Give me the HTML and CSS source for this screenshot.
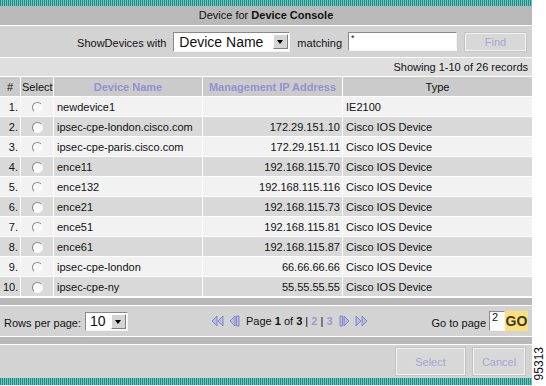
FILE: index.html
```html
<!DOCTYPE html>
<html>
<head>
    <meta charset="UTF-8">
    <title>Device for Device Console</title>
    <link rel="stylesheet" href="styles.css">
</head>
<body>
<div class="page">
    <div class="panel">
        <div class="stripe"></div>
        <div class="title-bar">Device for <b>Device Console</b></div>

        <div class="search-bar">
            <span>ShowDevices with</span>
            <div class="dropdown dropdown-wide">
                <span class="dropdown-value">Device Name</span>
                <span class="dropdown-arrow"></span>
            </div>
            <span>matching</span>
            <div class="textbox">*</div>
            <button class="btn btn-find">Find</button>
        </div>

        <div class="records">Showing 1-10 of 26 records</div>

        <table class="devices">
            <tr class="head">
                <th class="col-num">#</th>
                <th class="col-select">Select</th>
                <th class="col-name sortable">Device Name</th>
                <th class="col-ip sortable">Management IP Address</th>
                <th class="col-type">Type</th>
            </tr>
            <tr class="odd">
                <td class="num">1.</td><td class="sel"><span class="radio"></span></td>
                <td>newdevice1</td><td class="ip"></td><td>IE2100</td>
            </tr>
            <tr class="even">
                <td class="num">2.</td><td class="sel"><span class="radio"></span></td>
                <td>ipsec-cpe-london.cisco.com</td><td class="ip">172.29.151.10</td><td>Cisco IOS Device</td>
            </tr>
            <tr class="odd">
                <td class="num">3.</td><td class="sel"><span class="radio"></span></td>
                <td>ipsec-cpe-paris.cisco.com</td><td class="ip">172.29.151.11</td><td>Cisco IOS Device</td>
            </tr>
            <tr class="even">
                <td class="num">4.</td><td class="sel"><span class="radio"></span></td>
                <td>ence11</td><td class="ip">192.168.115.70</td><td>Cisco IOS Device</td>
            </tr>
            <tr class="odd">
                <td class="num">5.</td><td class="sel"><span class="radio"></span></td>
                <td>ence132</td><td class="ip">192.168.115.116</td><td>Cisco IOS Device</td>
            </tr>
            <tr class="even">
                <td class="num">6.</td><td class="sel"><span class="radio"></span></td>
                <td>ence21</td><td class="ip">192.168.115.73</td><td>Cisco IOS Device</td>
            </tr>
            <tr class="odd">
                <td class="num">7.</td><td class="sel"><span class="radio"></span></td>
                <td>ence51</td><td class="ip">192.168.115.81</td><td>Cisco IOS Device</td>
            </tr>
            <tr class="even">
                <td class="num">8.</td><td class="sel"><span class="radio"></span></td>
                <td>ence61</td><td class="ip">192.168.115.87</td><td>Cisco IOS Device</td>
            </tr>
            <tr class="odd">
                <td class="num">9.</td><td class="sel"><span class="radio"></span></td>
                <td>ipsec-cpe-london</td><td class="ip">66.66.66.66</td><td>Cisco IOS Device</td>
            </tr>
            <tr class="even">
                <td class="num">10.</td><td class="sel"><span class="radio"></span></td>
                <td>ipsec-cpe-ny</td><td class="ip">55.55.55.55</td><td>Cisco IOS Device</td>
            </tr>
        </table>

        <div class="divider-bar"></div>

        <div class="pager">
            <div class="rows-per-page">
                <span>Rows per page:</span>
                <div class="dropdown dropdown-small">
                    <span class="dropdown-value">10</span>
                    <span class="dropdown-arrow"></span>
                </div>
            </div>

            <div class="page-nav">
                <svg class="nav-icon" width="13" height="12" viewBox="0 0 13 12">
                    <path d="M6 1 L1 6 L6 11 Z M12 1 L7 6 L12 11 Z"/>
                </svg>
                <svg class="nav-icon" width="12" height="12" viewBox="0 0 12 12">
                    <path d="M7 1 L2 6 L7 11 Z M8.5 1 H11 V11 H8.5 Z"/>
                </svg>
                <span class="page-label">Page <b>1</b> of <b>3</b> | <a class="page-link">2</a> | <a class="page-link">3</a></span>
                <svg class="nav-icon" width="12" height="12" viewBox="0 0 12 12">
                    <path d="M1 1 H3.5 V11 H1 Z M5 1 L10 6 L5 11 Z"/>
                </svg>
                <svg class="nav-icon" width="13" height="12" viewBox="0 0 13 12">
                    <path d="M1 1 L6 6 L1 11 Z M7 1 L12 6 L7 11 Z"/>
                </svg>
            </div>

            <div class="goto">
                <span>Go to page</span>
                <div class="textbox textbox-page">2</div>
                <button class="btn-go">GO</button>
            </div>
        </div>

        <div class="divider-bar"></div>

        <div class="actions">
            <button class="btn btn-action">Select</button>
            <button class="btn btn-action">Cancel</button>
        </div>

        <div class="stripe"></div>
    </div>

    <div class="fig-num"><span>95313</span></div>
</div>
</body>
</html>
```

FILE: styles.css
```css
body {
    margin: 0;
    background: #fff;
    font-family: "Liberation Sans", Arial, sans-serif;
    font-size: 11px;
    color: #111;
}

.page {
    display: flex;
    width: 546px;
    height: 386px;
    overflow: hidden;
}

.panel {
    width: 532px;
    display: flex;
    flex-direction: column;
}

.stripe {
    height: 6px;
    background: repeating-linear-gradient(90deg, #1f8c88 0 1px, #6cc4bd 1px 2px);
}

.panel .stripe:last-child {
    height: 7px;
}

.title-bar {
    height: 19px;
    line-height: 19px;
    text-align: center;
    background: #b9b9b9;
    font-size: 11px;
}

/* Search row */
.search-bar {
    display: flex;
    align-items: center;
    justify-content: flex-end;
    gap: 7px;
    height: 31px;
    margin-top: 1px;
    padding-right: 6px;
    background: #d3d3d3;
    font-size: 11px;
}

.search-bar > span {
    margin-top: 3px;
}

.dropdown {
    display: flex;
    align-items: center;
    justify-content: space-between;
    background: #fff;
    border: 1px solid;
    border-color: #8a8a8a #f4f4f4 #f4f4f4 #8a8a8a;
    box-sizing: border-box;
}

.dropdown-wide {
    width: 117px;
    height: 20px;
    font-size: 14px;
    padding-left: 5px;
}

.dropdown-small {
    width: 43px;
    height: 19px;
    font-size: 14px;
    padding-left: 4px;
}

.dropdown-arrow {
    position: relative;
    width: 15px;
    height: 15px;
    margin-right: 1px;
    background: #d4d4d4;
    border: 1px solid;
    border-color: #fff #808080 #808080 #fff;
    box-sizing: border-box;
}

.dropdown-arrow:before {
    content: "";
    position: absolute;
    left: 3px;
    top: 5px;
    border-left: 3.5px solid transparent;
    border-right: 3.5px solid transparent;
    border-top: 4px solid #000;
}

.textbox {
    width: 109px;
    height: 19px;
    box-sizing: border-box;
    background: #fff;
    border: 1px solid;
    border-color: #8a8a8a #f4f4f4 #f4f4f4 #8a8a8a;
    font-size: 9px;
    line-height: 10px;
    padding-left: 2px;
    margin-left: -1px;
}

.btn {
    font-family: "Liberation Sans", Arial, sans-serif;
    background: #d8d8d8;
    border: 1px solid #f2f2f2;
    outline: 1px solid #c4c4c4;
    color: #a6a6cf;
    font-size: 11px;
    padding: 0;
}

.btn-find {
    width: 61px;
    height: 18px;
    margin-left: 1px;
}

.records {
    height: 18px;
    line-height: 19px;
    margin-top: 1px;
    text-align: right;
    padding-right: 4px;
    background: #dfdfdf;
}

/* Device table */
.devices {
    width: 532px;
    border-collapse: collapse;
    table-layout: fixed;
}

.devices th,
.devices td {
    border: 1px solid #fff;
    height: 19px;
    padding: 0 3px;
    font-size: 11px;
    white-space: nowrap;
    overflow: hidden;
}

.devices th:first-child,
.devices td:first-child {
    border-left: none;
}

.devices th:last-child,
.devices td:last-child {
    border-right: none;
}

.head th {
    background: #cbcbcb;
    font-weight: normal;
}

.devices .col-num { width: 14px; }
.devices .col-select { width: 30px; padding: 0 1px; }
.devices .col-name { width: 142px; }
.devices .col-ip { width: 133px; }

.head .sortable {
    color: #9292d2;
    font-weight: bold;
}

.odd td { background: #f2f2f2; }
.even td { background: #d9d9d9; }

.devices .num { text-align: right; padding-right: 2px; }
.devices .sel { text-align: center; }
.devices .ip { text-align: right; padding-right: 2px; }

.radio {
    display: inline-block;
    width: 9px;
    height: 9px;
    border-radius: 50%;
    border: 1.5px solid;
    border-color: #8a8a8a #f8f8f8 #f8f8f8 #8a8a8a;
    background: #fbfbfb;
    vertical-align: middle;
    margin-top: 1px;
}

.divider-bar {
    height: 7px;
    margin-top: 1px;
    background: #b9b9b9;
}

/* Paging row */
.pager {
    display: flex;
    align-items: center;
    height: 30px;
    margin-top: 1px;
    padding: 0 4px;
    background: #d3d3d3;
    font-size: 11px;
}

.rows-per-page,
.goto,
.page-nav {
    display: flex;
    align-items: center;
}

.rows-per-page {
    gap: 4px;
    width: 207px;
}

.rows-per-page > span {
    margin-top: 4px;
}

.page-nav {
    gap: 4px;
    white-space: nowrap;
}

.nav-icon path {
    fill: #b8b8ea;
    stroke: #7878bb;
    stroke-width: 0.8;
}

.page-label {
    margin: 0 2px;
}

.page-link {
    color: #9a9ad6;
    font-weight: bold;
}

.goto {
    flex: 1;
    justify-content: flex-end;
}

.goto > span {
    margin-right: 3px;
    margin-top: 4px;
}

.textbox-page {
    width: 16px;
    height: 20px;
    font-size: 11px;
    line-height: 11px;
    margin-left: 0;
}

.btn-go {
    width: 23px;
    height: 20px;
    background: #ffdf7a;
    border: none;
    padding: 0;
    font-family: "Liberation Sans", Arial, sans-serif;
    font-size: 14px;
    font-weight: bold;
    color: #3a3a2a;
}

/* Bottom buttons */
.actions {
    display: flex;
    justify-content: flex-end;
    align-items: center;
    gap: 8px;
    height: 33px;
    margin-top: 1px;
    padding-right: 7px;
    background: #d3d3d3;
}

.btn-action {
    width: 69px;
    height: 27px;
}

.btn-action:last-child {
    width: 52px;
}

.fig-num {
    flex: 1;
    display: flex;
    align-items: flex-end;
    justify-content: center;
    padding-bottom: 6px;
}

.fig-num span {
    writing-mode: vertical-rl;
    transform: rotate(180deg);
    font-size: 12px;
}
```
